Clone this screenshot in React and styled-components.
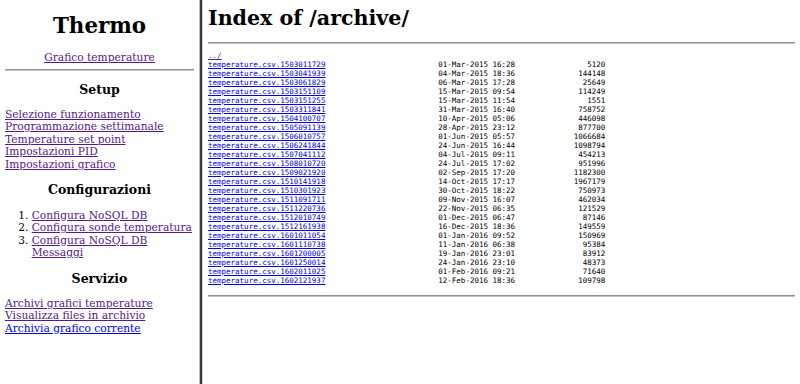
import React from "react";
import styled, { createGlobalStyle } from "styled-components";

const GlobalStyle = createGlobalStyle`
  html, body {
    margin: 0;
    padding: 0;
    background: #ffffff;
  }
  body {
    font-family: "DejaVu Serif", serif;
    font-size: 10.67px;
    color: #000;
  }
`;

const Frameset = styled.div`
  display: flex;
  width: 800px;
  height: 384px;
  overflow: hidden;
`;

const LeftFrame = styled.div`
  width: 199px;
  flex: 0 0 199px;
  box-sizing: border-box;
  padding: 0 5px;
  overflow: hidden;
`;

const Divider = styled.div`
  flex: 0 0 2px;
  background: #3a3a3a;
  border-left: 1px solid #bdbdbd;
  border-right: 1px solid #d4d4d4;
`;

const RightFrame = styled.div`
  flex: 1;
  box-sizing: border-box;
  padding: 0 5px;
  overflow: hidden;
`;

const Title = styled.h1`
  font-family: "DejaVu Serif", serif;
  font-weight: bold;
  font-size: ${(p) => p.$size || 21.33}px;
  line-height: 24px;
  margin: ${(p) => p.$top}px 0 0;
  text-align: ${(p) => (p.$center ? "center" : "left")};
`;

const Link = styled.a`
  color: ${(p) => (p.$visited ? "#551a8b" : "#0000ee")};
  text-decoration: underline;
  cursor: pointer;
`;

const CenterLine = styled.div`
  text-align: center;
  line-height: 12.5px;
  margin-top: 14px;
`;

const Rule = styled.hr`
  height: 0;
  margin: ${(p) => p.$top}px 0 0;
  border: none;
  border-top: 1px solid #8f8f8f;
  border-bottom: 1px solid #c4c4c4;
`;

const Section = styled.h3`
  font-family: "DejaVu Serif", serif;
  font-weight: bold;
  font-size: 12.5px;
  line-height: 14.5px;
  text-align: center;
  margin: ${(p) => p.$top}px 0 0;
`;

const LinkList = styled.div`
  display: flex;
  flex-direction: column;
  align-items: flex-start;
  line-height: 12.5px;
  margin-top: ${(p) => p.$top}px;
`;

const Ordered = styled.ol`
  margin: 12.5px 0 0;
  padding-left: 26.7px;
  line-height: 12.5px;
`;

const Listing = styled.pre`
  font-family: "DejaVu Sans Mono", monospace;
  font-size: 7.5px;
  line-height: 9px;
  margin: 7px 0 0;
`;

const files = [
  ["1503011729", "01-Mar-2015 16:28", "5120"],
  ["1503041939", "04-Mar-2015 18:36", "144148"],
  ["1503061829", "06-Mar-2015 17:28", "25649"],
  ["1503151109", "15-Mar-2015 09:54", "114249"],
  ["1503151255", "15-Mar-2015 11:54", "1551"],
  ["1503311841", "31-Mar-2015 16:40", "758752"],
  ["1504100707", "10-Apr-2015 05:06", "446098"],
  ["1505091139", "28-Apr-2015 23:12", "877700"],
  ["1506010757", "01-Jun-2015 05:57", "1066684"],
  ["1506241844", "24-Jun-2015 16:44", "1098794"],
  ["1507041112", "04-Jul-2015 09:11", "454213"],
  ["1508010720", "24-Jul-2015 17:02", "951996"],
  ["1509021920", "02-Sep-2015 17:20", "1182300"],
  ["1510141918", "14-Oct-2015 17:17", "1967179"],
  ["1510301923", "30-Oct-2015 18:22", "750973"],
  ["1511091711", "09-Nov-2015 16:07", "462034"],
  ["1511220736", "22-Nov-2015 06:35", "121529"],
  ["1512010749", "01-Dec-2015 06:47", "87146"],
  ["1512161938", "16-Dec-2015 18:36", "149559"],
  ["1601011054", "01-Jan-2016 09:52", "150969"],
  ["1601110738", "11-Jan-2016 06:38", "95384"],
  ["1601200005", "19-Jan-2016 23:01", "83912"],
  ["1601250014", "24-Jan-2016 23:10", "48373"],
  ["1602011025", "01-Feb-2016 09:21", "71640"],
  ["1602121937", "12-Feb-2016 18:36", "109798"],
];

const setupLinks = [
  "Selezione funzionamento",
  "Programmazione settimanale",
  "Temperature set point",
  "Impostazioni PID",
  "Impostazioni grafico",
];

const configLinks = [
  "Configura NoSQL DB",
  "Configura sonde temperatura",
  "Configura NoSQL DB Messaggi",
];

const App = () => {
  return (
    <>
      <GlobalStyle />
      <Frameset>
        <LeftFrame>
          <Title $center $top={14}>Thermo</Title>
          <CenterLine>
            <Link $visited>Grafico temperature</Link>
          </CenterLine>
          <Rule $top={4.5} />
          <Section $top={12}>Setup</Section>
          <LinkList $top={11}>
            {setupLinks.map((t) => (
              <Link key={t} $visited>{t}</Link>
            ))}
          </LinkList>
          <Section $top={11.5}>Configurazioni</Section>
          <Ordered>
            {configLinks.map((t) => (
              <li key={t}>
                <Link $visited>{t}</Link>
              </li>
            ))}
          </Ordered>
          <Section $top={12}>Servizio</Section>
          <LinkList $top={11.5}>
            <Link $visited>Archivi grafici temperature</Link>
            <Link $visited>Visualizza files in archivio</Link>
            <Link>Archivia grafico corrente</Link>
          </LinkList>
        </LeftFrame>
        <Divider />
        <RightFrame>
          <Title $top={6} $size={20.6}>Index of /archive/</Title>
          <Rule $top={12} />
          <Listing>
            <Link $visited>../</Link>
            {"\n"}
            {files.map(([id, date, size]) => {
              const name = "temperature.csv." + id;
              return (
                <React.Fragment key={id}>
                  <Link>{name}</Link>
                  {" ".repeat(51 - name.length) + date + size.padStart(20) + "\n"}
                </React.Fragment>
              );
            })}
          </Listing>
          <Rule $top={9.5} />
        </RightFrame>
      </Frameset>
    </>
  );
};

export default App;
